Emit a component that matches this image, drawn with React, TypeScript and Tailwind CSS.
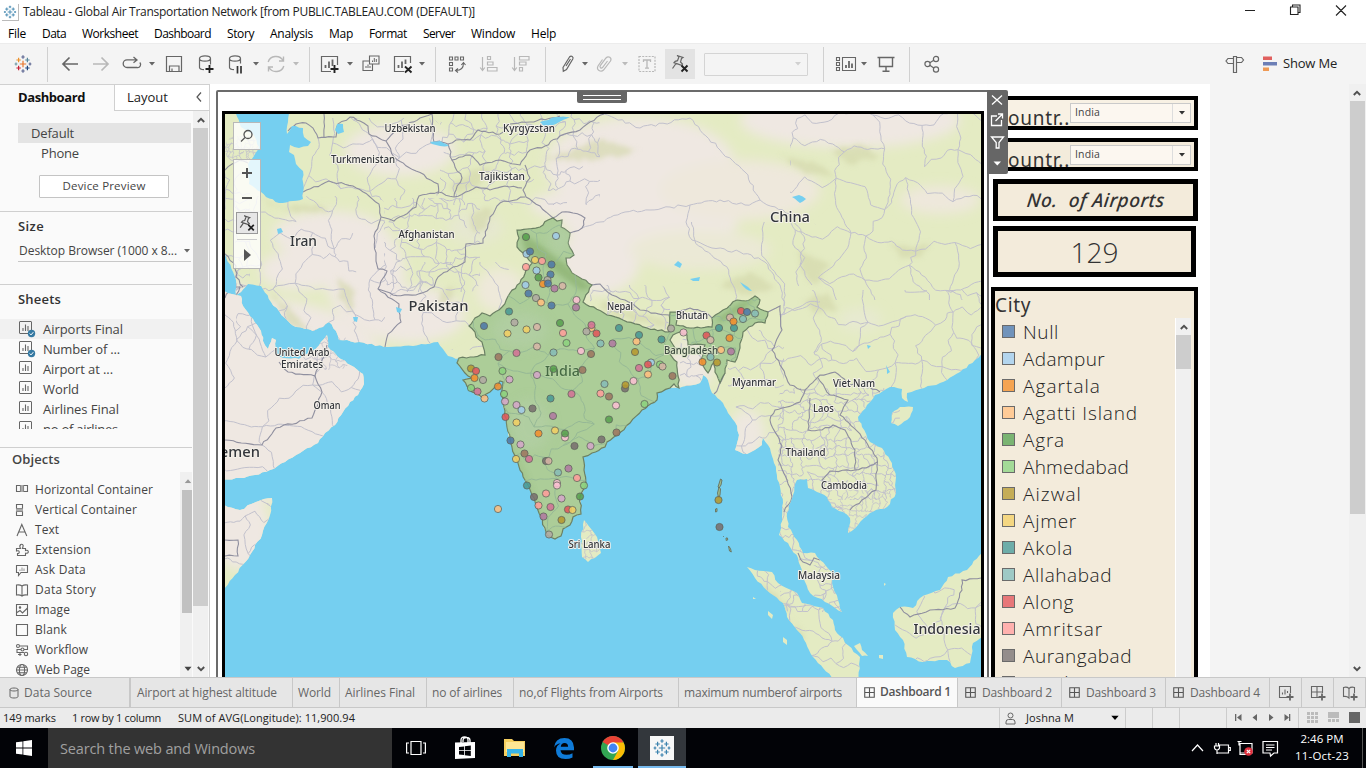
import React, { useLayoutEffect, useRef } from "react";

/* ---------- text helper: tracks a run of text out to a given width ---------- */
function T({ w, className = "", children }: { w?: number; className?: string; children: string }) {
  const ref = useRef<HTMLSpanElement>(null);
  useLayoutEffect(() => {
    const el = ref.current;
    if (!el || !w) return;
    el.style.letterSpacing = "0px";
    const natural = el.getBoundingClientRect().width;
    el.style.letterSpacing = `${((w - natural) / children.length).toFixed(3)}px`;
  }, [w, children]);
  return (
    <span ref={ref} className={`inline-block shrink-0 whitespace-pre ${className}`}>
      {children}
    </span>
  );
}

/* ---------- map geometry ---------- */
type P = [number, number];
const pts = (s: string): P[] => s.trim().split(/\s+/).map((p) => p.split(",").map(Number) as P);
function rng(seed: number) {
  let s = (seed * 2654435761) % 4294967296;
  return () => {
    s = (s * 1664525 + 1013904223) % 4294967296;
    return s / 4294967296;
  };
}
function rough(points: P[], amp: number, seed: number, close = false) {
  const r = rng(seed);
  const list = close ? [...points, points[0]] : points;
  let d = `M${list[0][0].toFixed(1)} ${list[0][1].toFixed(1)}`;
  for (let i = 1; i < list.length; i++) {
    const [ax, ay] = list[i - 1];
    const [bx, by] = list[i];
    const len = Math.hypot(bx - ax, by - ay);
    const n = Math.max(1, Math.round(len / 4));
    for (let k = 1; k < n; k++) {
      const o = (r() - 0.5) * 2 * amp;
      const x = ax + ((bx - ax) * k) / n - ((by - ay) / len) * o;
      const y = ay + ((by - ay) * k) / n + ((bx - ax) / len) * o;
      d += `L${x.toFixed(1)} ${y.toFixed(1)}`;
    }
    d += `L${bx.toFixed(1)} ${by.toFixed(1)}`;
  }
  return d + (close ? "Z" : "");
}
function wander(a: P, b: P, r: () => number, seed: number) {
  const at = (t: number): P => {
    const o = (r() - 0.5) * 0.3;
    return [a[0] + (b[0] - a[0]) * t - (b[1] - a[1]) * o, a[1] + (b[1] - a[1]) * t + (b[0] - a[0]) * o];
  };
  return rough([a, at(0.25), at(0.5), at(0.75), b], 0.8, seed);
}
function mesh(x0: number, y0: number, x1: number, y1: number, cell: number, seed: number) {
  const r = rng(seed);
  const cols = Math.ceil((x1 - x0) / cell) + 1;
  const rows = Math.ceil((y1 - y0) / cell) + 1;
  const g: P[][] = [];
  for (let j = 0; j < rows; j++) {
    g.push([]);
    for (let i = 0; i < cols; i++)
      g[j].push([x0 + (i + (r() - 0.5) * 0.8 + (j % 2) * 0.3) * cell, y0 + (j + (r() - 0.5) * 0.8) * cell]);
  }
  let d = "";
  for (let j = 0; j < rows; j++)
    for (let i = 0; i < cols; i++) {
      if (i + 1 < cols && r() < 0.78) d += wander(g[j][i], g[j][i + 1], r, seed + i * 7 + j * 13);
      if (j + 1 < rows && r() < 0.78) d += wander(g[j][i], g[j + 1][i], r, seed + i * 11 + j * 17 + 5);
    }
  return d;
}

const EURASIA =
  "220,110 220,216 225,254 236,280 236,295 241,292 248,284 261,286 271,302 279,311 288,321 296,327 313,331 323,327 329,322 336,331 339,340 359,342 384,347 413,346 438,342 443,349 448,356 456,359 459,358 457,363 465,373 472,378 463,380 472,392 483,398 490,392 500,381 503,382 502,390 503,403 507,427 512,447 518,463 525,480 532,495 541,517 547,535 555,539 561,536 563,529 570,525 573,517 581,514 580,497 586,485 584,470 583,457 592,453 605,447 607,442 617,435 630,423 642,410 657,400 657,393 670,388 679,388 700,383 703,375 708,380 712,393 723,403 728,413 735,422 739,435 735,450 747,454 762,445 763,438 768,445 774,463 780,487 783,503 782,517 779,535 788,543 798,558 803,577 810,593 825,602 842,612 838,600 833,587 832,572 820,560 815,553 803,553 797,540 788,527 787,513 793,495 797,480 807,479 808,488 817,492 827,497 832,507 843,512 850,518 848,533 858,525 870,513 887,507 896,493 896,477 890,460 882,448 870,442 862,427 858,417 867,405 875,395 890,387 902,389 902,398 908,402 907,393 920,389 940,383 960,372 975,360 986,352 986,110";
const ARABIA =
  "220,290 236,295 241,296 243,306 253,319 261,331 263,341 268,349 272,338 276,340 275,354 283,358 299,359 313,351 321,342 327,335 328,347 338,357 354,367 363,374 364,384 358,395 350,402 343,412 335,425 325,433 318,443 300,453 285,462 270,470 255,475 240,478 220,481";
const LANDS: string[] = [
  EURASIA,
  ARABIA,
  "220,504 240,510 256,502 272,498 270,515 262,535 250,555 235,575 220,594",
  "892,413 900,407 913,407 910,417 898,426 891,423",
  "747,567 755,570 772,572 778,583 797,593 802,603 823,608 833,620 835,630 843,638 845,643 860,657 859,680 834,680 813,657 800,633 787,617 783,603 770,593 755,578",
  "984,550 967,570 948,577 940,590 920,598 913,608 900,607 893,613 895,630 903,640 907,657 923,662 947,660 955,668 970,663 973,643 984,635",
  "584,520 597,537 601,553 588,562 582,557 581,537",
  "854,646 860,643 862,650 868,656 862,656",
  "879,655 883,655 883,659 879,658",
  "768,611 773,615 772,619 768,615",
  "783,637 787,640 787,645 783,642",
  "753,597 756,599 753,599",
  "884,583 886,584 884,586",
];
const CASPIAN =
  "234,110 290,110 288,122 287,134 292,126 303,128 304,137 311,142 308,146 299,148 290,145 289,152 294,155 296,164 303,171 303,199 293,201 279,203 266,197 261,192 249,184 248,164 254,156 259,147 253,134 241,127";
const INDIA =
  "459,358 485,355 482,342 476,337 475,332 469,326 475,318 482,313 490,316 502,307 510,293 520,283 526,270 532,263 523,253 517,247 519,238 517,230 527,229 540,227 548,220 553,218 557,221 562,220 561,227 570,233 568,243 574,255 570,258 566,258 567,265 572,273 592,285 583,302 607,315 623,320 647,328 669,332 670,312 677,312 676,325 690,328 712,327 712,318 723,310 737,300 746,301 755,296 760,300 757,307 768,312 765,323 755,323 743,332 740,348 735,362 727,360 725,373 720,383 715,372 714,362 708,373 702,363 703,350 705,345 688,345 687,335 680,332 673,335 670,340 675,348 670,354 677,362 678,376 679,388 674,384 670,388 657,393 657,400 642,410 630,423 617,435 607,442 605,447 592,453 583,457 584,470 586,485 580,497 581,514 573,517 570,525 563,529 561,536 555,539 547,535 541,517 532,495 525,480 518,463 512,447 507,427 503,403 502,390 503,382 500,381 490,392 483,398 472,392 463,380 472,378 465,373 457,363";
const BORDERS: string[] = [
  "225,254 236,266 236,277 243,287",
  "225,298 230,288 240,287 236,295",
  "225,170 232,164 240,160 248,163",
  "288,131 296,124 306,123 313,128 318,138 336,137 338,124 350,117 360,121 368,126 369,134 386,141 394,157 416,171 438,184 438,194",
  "324,114 324,138",
  "303,192 329,181 353,186 369,196 379,204 381,217 374,236 376,257 378,269 387,271 378,289 399,304 401,322 388,334 385,347",
  "381,217 394,221 416,207 419,196 438,192 454,197 476,187 490,190 505,186 522,188",
  "378,289 393,295 416,295 434,287 438,277 453,267 465,262 466,244 483,243 490,217 500,203 525,197",
  "386,141 400,128 420,118 432,114 434,142 448,144 456,140 470,140 478,130 500,134 510,124 530,122 560,116",
  "448,144 452,160 470,155 480,165 500,160 520,165 530,150 545,146 560,136 580,130 590,122 604,114",
  "452,160 462,178 456,190 454,197",
  "525,165 530,178 523,190 526,197 540,206 553,218",
  "592,285 600,284 612,295 625,300 640,310 655,313 669,315 670,320",
  "677,312 690,308 705,312 712,318",
  "768,312 780,306 782,330 772,350 780,365 790,385 805,390 800,402 775,410 770,420 782,446 778,460 787,480 792,497 784,512",
  "725,373 718,388 714,394",
  "805,390 815,380 820,375 835,372 850,385 865,385 880,392",
  "818,378 830,395 848,400 840,415 865,440 877,458 876,490 862,500 850,510",
  "810,398 808,430 822,430 833,425 845,430 855,450 855,470 830,471 822,480 824,490",
  "855,470 866,468 877,462",
  "899,606 910,617 930,610 955,608 962,590 962,580 981,578",
  "798,553 803,562 810,565 814,558 820,560",
  "279,362 288,372 315,376 322,360 327,345",
  "315,376 322,392 312,418 276,428 262,445 225,440",
  "225,540 238,540 238,556 225,556",
  "553,218 562,212 573,213 585,218 582,228 570,233",
];
const FINE: [string, number, number, number, number, number][] = [
  ["iran", 236, 196, 385, 350, 24],
  ["afghan", 384, 198, 480, 292, 13],
  ["turk", 300, 118, 440, 200, 34],
  ["stan", 440, 114, 600, 205, 15],
  ["pak", 390, 262, 515, 350, 34],
  ["tibet", 600, 222, 820, 315, 90],
  ["china", 790, 114, 990, 300, 42],
  ["south", 780, 290, 990, 395, 28],
  ["sea1", 778, 388, 900, 500, 9],
  ["sea2", 840, 490, 900, 535, 6],
  ["burma", 728, 330, 784, 460, 19],
  ["malay", 780, 500, 845, 612, 14],
  ["sumatra", 745, 565, 865, 680, 25],
  ["borneo", 890, 560, 984, 670, 32],
  ["arabia", 225, 300, 360, 480, 44],
  ["uae", 312, 335, 350, 370, 7],
  ["cauc", 225, 136, 258, 162, 4],
  ["iraq", 225, 165, 250, 290, 14],
  ["nepal", 590, 285, 670, 332, 15],
  ["bd", 680, 335, 703, 388, 11],
  ["lanka", 580, 520, 602, 562, 7],
  ["somalia", 225, 500, 272, 590, 24],
];
const SOFT_BORDERS = [
  "582,228 600,222 625,212 650,210 670,207 690,205 686,222 692,240 712,248 740,252 765,262 780,285 784,306",
  "604,114 640,128 690,118 720,150 745,172 760,200 790,214 805,240 800,265 812,285",
  "690,205 720,200 745,205 760,200",
];
const C: Record<string, string> = {
  g: "#59a14f", a: "#a0cbe8", b: "#4e79a7", y: "#f1ce63", s: "#ff9d9a", o: "#f28e2b", z: "#b0aaa2", t: "#d7b5a6",
  u: "#b07aa1", v: "#d4a6c8", p: "#ffbe7d", e: "#499894", l: "#86bcb6", n: "#9d7660", r: "#d37295", k: "#fabfd2",
  d: "#e15759", h: "#8cd17d", w: "#b6992d", x: "#79706e",
};
const MARKS =
  "526,237,g 556,236,a 526.5,254,a 530,251.5,b 535,260,y 542,261,s 551.5,264.5,b 526,267,s 536.5,270.5,a 550.5,274.5,b 538.5,277.5,g 547.5,280,z 543,284,o 548,283.5,b 525.5,285,a 554.5,288.5,u 562.5,286,t 528.5,293.5,b 536,298,z 541,302.5,p 551.5,305.5,b 576.5,300,k 576,307.5,u 509,311.5,e 514.5,322.5,z 484,326,b 507.5,333.5,y 526.5,329.5,y 537,327,t 560,323,g 563,333,s 591.5,328,p 591.5,325,r 596.5,333.5,d 586.5,331.5,z 619,328,e 639,335,e 661.5,339.5,e 636.5,341.5,p 635,352,w 600.5,343.5,l 612.5,343.5,u 566.5,343,h 537,346.5,t 553.5,352.5,l 516.5,353,r 498.5,357,n 581,351,k 591,354,n 502.5,371,h 509.5,379.5,v 471,368.5,w 476,371,d 474.5,378,o 483,380,z 553.5,369,g 582.5,370,n 537,375,v 651,362.5,a 648,364.5,d 660,364.5,h 662.5,366.5,t 639,368,r 648,374.5,p 672.5,376,n 633.5,381,k " +
  "671,328.5,z 683.5,332.5,k 706.5,335.5,d 710.5,340,t 719,328,e 734,328,e 730,317.5,t 733.5,321.5,o 741,311,d 747,312,b 743,319,l 755,313.5,l 729.5,338,o 721,350,p 731,351.5,u 710.5,357,l 702.5,362,o 717,362.5,w " +
  "498,386.5,o 471,388,h 477.5,391.5,r 484.5,398.5,p 504,394,h 505,401.5,v 516.5,405,v 521.5,410,a 532.5,408.5,x 550.5,398.5,e 571.5,394,r 604.5,384,l 600.5,393.5,s 609,396.5,n 625,388.5,x 625.5,385,w 616,405.5,k 644.5,404,h 553,416,u 505.5,417,d 516.5,422.5,y 538.5,433.5,o 555,430.5,y 565,437.5,k 565,433.5,g 609,419.5,g 616.5,432.5,n 601.5,439.5,x 590.5,446,v 574.5,446,x 510.5,440.5,b 520.5,444.5,v 524.5,453.5,n 529,459,r 516,459,y 546,461,x 548.5,461,t 568.5,468.5,u 558,472.5,l 577,478,s 557,483,k 557,485.5,k 527,485.5,e 534,497,x 546,493.5,s 561.5,498.5,v 584,485.5,h 580,496.5,g 538.5,505.5,s 550.5,507,r 568,509.5,d 572.5,510,y 543.5,516.5,u 561.5,520,w 549,534.5,z 498,509,p 718.5,500,w 719.5,527,x";
const LABELS: [string, number, number, number, number][] = [
  ["Uzbekistan", 410, 132, 51, 10], ["Kyrgyzstan", 529, 132, 52, 10], ["Turkmenistan", 363, 163, 64, 10],
  ["Tajikistan", 502, 180, 46, 10], ["Afghanistan", 426.5, 237.5, 56, 10], ["Iran", 303.5, 245.5, 27, 15],
  ["China", 790, 222, 40, 15], ["Pakistan", 438.5, 311, 60, 15], ["Nepal", 620, 310, 26, 10],
  ["Bhutan", 692, 318.5, 32, 10], ["Myanmar", 754, 386, 44, 10],
  ["Viet Nam", 854, 387, 42, 10], ["Laos", 823.5, 412, 21, 10], ["Thailand", 805.5, 456, 40, 10],
  ["Cambodia", 844, 489, 46, 10], ["Malaysia", 819, 579, 42, 10], ["Indonesia", 947, 634, 67, 15],
  ["Sri Lanka", 589.5, 548, 42, 10], ["Oman", 327, 409, 27, 10], ["United Arab", 302, 355.5, 55, 10],
  ["Emirates", 302, 367.5, 42, 10], ["Yemen", 236, 457, 48, 15],
];
const DRY: [number, number, number, number, string][] = [
  [330, 235, 58, 24, "#efe8e2"], [400, 150, 55, 26, "#efe8e2"], [300, 270, 40, 20, "#efe8e2"], [365, 275, 40, 50, "#efe8e2"],
  [270, 400, 130, 100, "#efe8e2"], [410, 315, 55, 28, "#efe8e2"], [500, 290, 24, 22, "#eee9da"], [640, 165, 95, 48, "#efe8e2"],
  [650, 215, 90, 42, "#efe8e2"], [600, 260, 40, 34, "#efe8e2"], [850, 120, 110, 28, "#efe8e2"], [740, 190, 80, 30, "#eee8dc"],
  [940, 200, 40, 14, "#eee8dc"], [692, 365, 22, 25, "#eee8e0"], [747, 435, 18, 26, "#eee8e0"], [240, 530, 30, 40, "#efe8e2"],
  [230, 310, 24, 30, "#efe8e2"], [860, 320, 22, 12, "#e7ead0"], [570, 205, 40, 14, "#efe8e2"], [475, 228, 28, 16, "#e6e8d0"],
  [700, 250, 70, 20, "#ebe9d6"],
];
const HILLS = [
  "262,197 285,208 318,204 330,212 300,212 268,206", "270,290 300,318 312,335 290,325", "335,275 355,290 352,312 340,300",
  "450,185 475,170 495,168 480,184 455,195", "470,215 492,205 488,228 474,232", "600,300 640,315 668,320 668,328 630,320 600,308",
  "540,160 600,140 640,150 600,160", "720,285 750,272 775,288 750,296", "800,250 830,265 815,285 800,270",
  "890,242 910,248 930,242 922,256 900,260", "780,155 815,163 835,176 805,174", "800,302 828,292 838,308 815,314",
  "830,150 862,144 880,158 850,164", "760,582 778,597 790,610 780,612 768,598", "790,615 805,640 800,640", "440,290 455,288 450,305 440,304",
];
const LAKES = [
  "337,124 343,124 344,132 338,134 335,130", "430,142 440,141 449,146 440,146 432,144", "277,229 281,228 283,232 278,234",
  "396,307 402,309 400,313 397,312", "353,317 358,317 357,322 354,321", "674,265 678,261 682,264 680,268", "690,279 695,278 700,277 699,281 693,281",
  "792,197 799,195 806,199 800,203", "740,282 748,287 752,291 746,289", "540,122 556,117 570,117 556,124 545,127",
  "886,365 890,372 887,374", "867,345 871,346 868,349",
];

function MapDrawing() {
  return (
    <svg viewBox="225 114 756 563" className="block h-full w-full">
      <defs>
        <clipPath id="land">{LANDS.map((l, i) => <path key={i} d={rough(pts(l), 0.9, i + 3, true)} />)}</clipPath>
        {FINE.map(([n, x0, y0, x1, y1]) => (
          <clipPath id={`r-${n}`} key={n}><rect x={x0} y={y0} width={x1 - x0} height={y1 - y0} rx="12" /></clipPath>
        ))}
        <clipPath id="india"><path d={rough(pts(INDIA), 0.9, 3, true)} /></clipPath>
        <filter id="soft" x="-20%" y="-20%" width="140%" height="140%"><feGaussianBlur stdDeviation="6" /></filter>
        <filter id="softer" x="-20%" y="-20%" width="140%" height="140%"><feGaussianBlur stdDeviation="2.4" /></filter>
      </defs>
      <rect x="225" y="114" width="756" height="563" fill="#75cff0" />
      <g clipPath="url(#land)">
        <rect x="225" y="114" width="756" height="563" fill="#e4ebc3" />
        <g filter="url(#soft)">{DRY.map(([x, y, rx, ry, f], i) => <ellipse key={i} cx={x} cy={y} rx={rx} ry={ry} fill={f} />)}</g>
        <g filter="url(#softer)">{HILLS.map((h, i) => <path key={i} d={rough(pts(h), 2.5, i + 60, true)} fill="#d2d6a9" opacity="0.62" />)}</g>
        {FINE.map(([n, x0, y0, x1, y1, c], i) => (
          <g key={n} clipPath={`url(#r-${n})`}>
            <path d={mesh(x0 - 4, y0 - 4, x1, y1, c, i + 21)} fill="none" stroke="#c1c0cc" strokeWidth={c < 8 ? 0.8 : 1} />
          </g>
        ))}
        {SOFT_BORDERS.map((b, i) => <path key={i} d={rough(pts(b), 1.5, i + 190)} fill="none" stroke="#c1c0cc" strokeWidth="1" />)}
        {BORDERS.map((b, i) => <path key={i} d={rough(pts(b), 1, i + 90)} fill="none" stroke="#8f8f9f" strokeWidth="1.1" />)}
      </g>
      <path d={rough(pts(CASPIAN), 0.8, 8, true)} fill="#75cff0" />
      {LAKES.map((l, i) => <path key={i} d={rough(pts(l), 0.6, i + 5, true)} fill="#75cff0" />)}
      <path d={rough(pts(INDIA), 0.9, 3, true)} fill="#accd98" stroke="#6b8064" strokeWidth="1.2" />
      <g clipPath="url(#india)">
        <g filter="url(#softer)" fill="#8db273" opacity="0.75">
          <path d="M520 232L545 248L575 272L592 288L580 290L550 268L525 250Z" />
          <path d="M715 320L740 303L756 298L745 308L722 322Z" />
          <path d="M503 400L512 440L530 480L545 520L538 520L520 480L505 440Z" opacity="0.3" />
        </g>
        <g filter="url(#soft)" fill="#b3cfa6" opacity="0.7">
          <ellipse cx="520" cy="330" rx="28" ry="18" /><ellipse cx="530" cy="425" rx="20" ry="26" /><ellipse cx="560" cy="240" rx="12" ry="14" />
        </g>
        <path d={mesh(460, 225, 685, 540, 38, 77)} fill="none" stroke="#96b896" strokeWidth="1" />
        <path d={mesh(690, 295, 775, 385, 20, 78)} fill="none" stroke="#96b896" strokeWidth="1" />
      </g>
      <g fill="#9fbd8c" stroke="#66705f" strokeWidth="0.9">
        <path d="M720.5 479l1.500 1-1 5-2 3-1-1zM719 487l1.500 2-.5 6-1.500 3-1-5z" />
        <path d="M715.500 509l1.500-.5v3l-1.500.5zM723 536l.8.8M726 538l1.500 0 .2 2-1.500.5zM728.500 546l2 2.500.8 3.500-1.800-1z" />
      </g>
      <g fontFamily="'Noto Sans', sans-serif" fontWeight="500" textAnchor="middle">
        {LABELS.map(([t, x, y, w, s]) => (
          <text key={t} x={x} y={y} fontSize={s} textLength={w} lengthAdjust="spacingAndGlyphs" fill="#33363b" stroke="#f4f1ea" strokeWidth="2" strokeLinejoin="round" paintOrder="stroke">{t}</text>
        ))}
        <text x="562.500" y="375.500" fontSize="15" textLength="35" lengthAdjust="spacingAndGlyphs" fill="#466a43" stroke="#b9d5a8" strokeWidth="1.500" paintOrder="stroke">India</text>
        <text x="691" y="354" fontSize="10" textLength="54" lengthAdjust="spacingAndGlyphs" fill="#3d4a40" stroke="#dbe4c8" strokeWidth="1.800" paintOrder="stroke">Bangladesh</text>
      </g>
      <g stroke="#5d635b" strokeWidth="0.9" strokeOpacity="0.85" fillOpacity="0.88">
        {MARKS.split(" ").map((m, i) => {
          const [x, y, c] = m.split(",");
          return <circle key={i} cx={x} cy={y} r="3.600" fill={C[c]} />;
        })}
      </g>
    </svg>
  );
}

/* ---------- small icons ---------- */
const Caret = ({ c = "fill-[#666]" }: { c?: string }) => (
  <svg viewBox="0 0 6 4" className={`h-[4px] w-[6px] shrink-0 ${c}`}><path d="M0 0h6L3 3.500z" /></svg>
);
function Ico({ children, className = "", dim = false }: { children: React.ReactNode; className?: string; dim?: boolean }) {
  return (
    <svg viewBox="0 0 22 22" className={`h-[22px] w-[22px] shrink-0 ${dim ? "text-[#b8b8b8]" : "text-[#666]"} ${className}`} fill="none" stroke="currentColor" strokeWidth="1.200">
      {children}
    </svg>
  );
}
const Sep = ({ className }: { className: string }) => <div className={`h-[35px] w-px shrink-0 bg-[#d0d0d0] ${className}`} />;
const Plus = ({ x, y, s, c }: { x: number; y: number; s: number; c: string }) => <path d={`M${x - s} ${y}h${2 * s}M${x} ${y - s}v${2 * s}`} stroke={c} strokeWidth="1.200" />;
function Logo({ mono = false }: { mono?: boolean }) {
  const c = mono ? Array(9).fill("#3c83ae") : ["#e8762c", "#5b6591", "#c72037", "#5c6692", "#1f447e", "#eb912c", "#59879b", "#7199a6", "#7199a6"];
  return (
    <>
      <Plus x={11} y={11} s={3.2} c={c[0]} />
      <Plus x={11} y={4} s={1.7} c={c[1]} />
      <Plus x={11} y={18} s={1.7} c={c[1]} />
      <Plus x={6.6} y={7} s={2.2} c={c[5]} />
      <Plus x={15.4} y={7} s={2.2} c={c[6]} />
      <Plus x={6.6} y={15} s={2.2} c={c[2]} />
      <Plus x={15.4} y={15} s={2.2} c={c[4]} />
      <Plus x={4} y={11} s={1.4} c={c[7]} />
      <Plus x={18} y={11} s={1.4} c={c[3]} />
    </>
  );
}
const Pin = () => (
  <>
    <path d="M8 2.500l6 2-1.500 1-1 3.500 2 2-1 1.200-4-1.300-3.500-1.200 1.200-1.400 2.300-.6 1.500-4zM7 10.500L3.500 15.500" />
    <path d="M12.500 12.500l6 6M18.500 12.500l-6 6" stroke="#222" strokeWidth="1.900" />
  </>
);
const Chevron = ({ down = false }: { down?: boolean }) => (
  <svg viewBox="0 0 8 6" className={`h-[6px] w-[8px] ${down ? "rotate-180" : ""}`} fill="none" stroke="#505050" strokeWidth="1.900"><path d="M.8 5L4 1.800 7.200 5" /></svg>
);

function Toolbar() {
  return (
    <div className="flex h-[41px] shrink-0 items-center border-t border-[#ececec] bg-[#f4f4f4] font-['Open_Sans',sans-serif]">
      <Ico className="ml-[12px]"><Logo /></Ico>
      <Sep className="ml-[13px]" />
      <Ico className="ml-[11px]"><path d="M19 11H4M10.500 4.500L4 11l6.500 6.500" strokeWidth="1.700" /></Ico>
      <Ico dim className="ml-[9px]"><path d="M3 11h15M11.500 4.500L18 11l-6.500 6.500" strokeWidth="1.700" /></Ico>
      <Ico className="ml-[9px]"><path d="M16 14.500H6a3.800 3.800 0 010-7.600h9.500M18.800 9.500a3 3 0 01-2.800 5M12.500 4l3.500 2.900-3.500 2.900" strokeWidth="1.300" /></Ico>
      <div className="ml-[6px]"><Caret /></div>
      <Ico className="ml-[8px]"><path d="M3.500 3.500h15v15h-15zM6.500 18.500V13h9.500v5.500M9 18v-2.500" /></Ico>
      <Ico className="ml-[10px]"><path d="M4.500 5.500c0-3.500 11-3.500 11 0s-11 3.500-11 0v9c0 1.300 2 2 4.500 2.200M15.500 5.500v6" /><path d="M14.500 12v8M10.500 16h8" stroke="#222" strokeWidth="1.800" /></Ico>
      <Ico className="ml-[8px]"><path d="M4.500 5.500c0-3.500 11-3.500 11 0s-11 3.500-11 0v9c0 1.300 2 2 4.500 2.200M15.500 5.500v5" /><path d="M12.500 13v7.500M16 13v7.500" stroke="#333" strokeWidth="1.700" /></Ico>
      <div className="ml-[6px]"><Caret /></div>
      <Ico dim className="ml-[6px]"><path d="M3.200 9A8 7.500 0 0118 7.500M18.800 13A8 7.500 0 014 14.500M18.500 3.500v4.500h-4.500M3.500 18.500V14H8" strokeWidth="1.400" /></Ico>
      <div className="ml-[6px]"><Caret c="fill-[#bbb]" /></div>
      <Sep className="ml-[10px]" />
      <Ico className="ml-[9px]"><path d="M12 18.500H2.500v-15h16V12" /><path d="M6.500 15v-3M10 15V8.500M13.500 13V6.500" strokeWidth="1.800" /><path d="M15.500 12v8M11.500 16h8" stroke="#222" strokeWidth="1.900" /></Ico>
      <div className="ml-[6px]"><Caret /></div>
      <Ico className="ml-[7px]"><path d="M9.500 3h9.500v8H9.500zM9 8H3v9.500h9.500V11.500" strokeWidth="1.100" /><path d="M12.500 9V7.500M14.300 9V5M16.300 9V6M6 15v-2M8 15v-3.500M10 15v-2" strokeWidth="1" /></Ico>
      <Ico className="ml-[10px]"><path d="M12 18.500H2.500v-15h16V10" /><path d="M6.500 15v-3M10 15V8.500M13.500 11V6.500" strokeWidth="1.800" /><path d="M13 13.500l6.500 6M19.500 13.500l-6.500 6" stroke="#222" strokeWidth="1.900" /></Ico>
      <div className="ml-[5px]"><Caret /></div>
      <Sep className="ml-[10px]" />
      <Ico className="ml-[10px]"><path d="M3.500 4h3v3h-3zM9 4h3v3H9zM14.500 4h3v3h-3zM3.500 9.500h3v3h-3zM3.500 15h3v3h-3zM10 17.500c5 0 7.500-2.500 7.500-7.500M15.300 12l2.200-2.500 2 2.500M12 15.500l-2.500 2 2.500 2" strokeWidth="1.100" /></Ico>
      <Ico dim className="ml-[10px]"><path d="M4.500 4v13M2.200 14.500l2.300 3 2.300-3M9.500 3.500h3v3h-3zM9.500 9h5.500v3H9.500zM9.500 14.500h9.500v3.500H9.500z" /></Ico>
      <Ico dim className="ml-[10px]"><path d="M4.500 4v13M2.200 14.500l2.300 3 2.300-3M9.500 3.500H19V7H9.500zM9.500 9h6.500v3H9.500zM9.500 14.500h3V18h-3z" /></Ico>
      <Sep className="ml-[13px]" />
      <Ico className="ml-[11px]"><path d="M6 14.500L12.500 4q1.300-1.500 2.700-.6t.6 2.600L9.500 16.500l-3.200 1.700zM9 13l4.500-7" /></Ico>
      <div className="ml-[3px]"><Caret /></div>
      <Ico dim className="ml-[6px]"><path d="M13.500 8l-5 6.500q-1 1-2 .2t-.2-2L12 5q1.800-2 3.800-.7t.7 3.700L9.500 17q-2 2-4.500.5t-1-4.500l4.500-6.500" /></Ico>
      <div className="ml-[6px]"><Caret c="fill-[#bbb]" /></div>
      <Ico dim className="ml-[8px]"><path d="M3 3.500h16v15H3z" strokeDasharray="2 1.200" /><path d="M7.500 9V7h7v2M11 7v8M9 15.200h4" strokeWidth="1.300" /></Ico>
      <div className="ml-[7px] flex h-[30px] w-[30px] items-center justify-center bg-[#e3e3e3]">
        <Ico className="text-[#444]"><Pin /></Ico>
      </div>
      <div className="ml-[9px] flex h-[23px] w-[104px] shrink-0 items-center justify-end rounded-[1px] border border-[#d4d4d4] pr-[6px]"><Caret c="fill-[#d0d0d0]" /></div>
      <Sep className="ml-[15px]" />
      <Ico className="ml-[11px]"><path d="M1.500 4.500h3v3h-3zM1.500 9.500h3v3h-3zM1.500 14.500h3v3h-3zM7.500 4.500h13v13h-13z" strokeWidth="1.100" /><path d="M11 15v-3M14 15V8M17 15v-4.500" strokeWidth="1.800" /></Ico>
      <div className="ml-[4px]"><Caret /></div>
      <Ico className="ml-[8px]"><path d="M2.500 4.500h17M4.500 5v8.500h13V5M11 13.500V18M7.500 18.200h7" strokeWidth="1.400" /></Ico>
      <Sep className="ml-[12px]" />
      <Ico className="ml-[11px]"><circle cx="6.500" cy="11" r="2.600" /><circle cx="15" cy="6" r="2.600" /><circle cx="15" cy="16.500" r="2.600" /><path d="M8.800 9.800l4-2.500M8.800 12.200l4 2.800" /></Ico>
      <Ico className="ml-[281px]"><path d="M9.500 3.500h3v16h-3zM12.500 4.500h5l2 2.500-2 2.500h-5M9.500 5.500H4L2 8l2 2.500h5.500" /></Ico>
      <svg viewBox="0 0 16 16" className="ml-[16px] h-[16px] w-[16px]"><path d="M1 .5h9v3.500H1z" fill="#e0605e" /><path d="M1 6h14v3.500H1z" fill="#6c7fb6" /><path d="M1 11.500h6V15H1z" fill="#ef9a55" /></svg>
      <div className="ml-[5px] flex pb-px"><T w={54} className="text-[13px] text-[#222]">Show Me</T></div>
    </div>
  );
}

const SheetIcon = ({ used }: { used: boolean }) => (
  <svg viewBox="0 0 18 18" className="h-[18px] w-[18px] shrink-0" fill="none" stroke="#666" strokeWidth="1">
    <rect x="1.500" y="1.500" width="12" height="12" rx="0.500" /><path d="M5 11V8M7.500 11V4.500M10 11V6" strokeWidth="1.100" />
    {used && <><circle cx="13.500" cy="13.500" r="3.700" fill="#3579a2" stroke="none" /><path d="M11.700 13.500l1.300 1.400 2.300-2.700" stroke="#fff" /></>}
  </svg>
);
const SHEETS: [string, number, boolean][] = [["Airports Final", 80, true], ["Number of ...", 77, true], ["Airport at ...", 70, false], ["World", 36, false], ["Airlines Final", 76, false], ["no of airlines", 75, false]];
const OBJECTS: [string, number, React.ReactNode][] = [
  ["Horizontal Container", 118, <><path d="M1.500 2.500h4v6h-4zM8.500 2.500h4v6h-4z" /><path d="M5.500 2h3v7h-3z" fill="#aaa" stroke="none" /></>],
  ["Vertical Container", 102, <><path d="M1.500 1.500h6v4h-6zM1.500 8.500h6v4h-6z" /><path d="M1 5.500h7v3H1z" fill="#aaa" stroke="none" /></>],
  ["Text", 24, <path d="M2 13L6.800 1.500 11.800 13M3.800 9h6" />],
  ["Extension", 56, <path d="M4 5.500h1.500Q4 3 5.700 1.500q2-.7 2.500 1.200L7.500 5.500h3v2q2.800-.8 2.800 1.200t-2.800 1.500v2.300H2.500V10.500q2 0 1.700-1.700T1.500 8V5.500z" />],
  ["Ask Data", 51, <><path d="M1.500 2.500h11v7H6l-2.500 3v-3h-2z" /><path d="M5 8V6.500M7 8V4.500M9 8V5.500" stroke="#999" /></>],
  ["Data Story", 61, <path d="M7 3q-2-1.500-5.500-1v10q3.500-.5 5.500 1 2-1.500 5.500-1V2Q9 1.500 7 3v10" />],
  ["Image", 35, <><path d="M1.500 1.500h11v11h-11zM2 9.500l3-2 2.500 2.500L12.500 5" /><circle cx="5" cy="4.500" r=".7" fill="#666" /></>],
  ["Blank", 32, <path d="M1.500 1.500h11v11h-11z" />],
  ["Workflow", 53, <><circle cx="3" cy="3" r="1.500" /><circle cx="7.500" cy="6.500" r="1.500" /><circle cx="11" cy="11" r="1.700" /><path d="M5 3h7.500v3.500H9M6 6.500H2v3h7M5 9.500V13M3 11.500h3.500" /></>],
  ["Web Page", 55, <><circle cx="7" cy="7" r="5.500" /><ellipse cx="7" cy="7" rx="2.600" ry="5.500" /><path d="M1.500 7h11M2.300 4.200h9.400M2.300 9.800h9.400" /></>],
];

function LeftPanel() {
  return (
    <div className="flex h-full w-[210px] shrink-0 flex-col border-r border-t border-[#d0d0d0] bg-[#fafafa] font-['Open_Sans',sans-serif] text-[#444]">
      <div className="flex h-[26px] shrink-0">
        <div className="flex w-[114px] items-center pl-[18px]"><T w={67} className="text-[13px] font-bold text-[#111]">Dashboard</T></div>
        <div className="flex flex-1 items-center justify-between border-b border-l border-[#d0d0d0] bg-white pl-[12px] pr-[7px]">
          <T w={41} className="text-[13px] text-[#222]">Layout</T>
          <svg viewBox="0 0 6 10" className="mb-[2px] h-[10px] w-[6px]" fill="none" stroke="#555" strokeWidth="1.200"><path d="M5 .5L1 5l4 4.500" /></svg>
        </div>
      </div>
      <div className="flex min-h-0 flex-1">
        <div className="flex w-[192px] shrink-0 flex-col overflow-hidden">
          <div className="ml-[18px] mr-px mt-[12px] flex h-[20px] shrink-0 items-center bg-[#e4e4e4] pl-[13px] pt-px"><T w={43} className="text-[13px]">Default</T></div>
          <div className="flex h-[20px] shrink-0 items-center pl-[41px] pt-[2px]"><T w={38} className="text-[13px]">Phone</T></div>
          <div className="ml-[39px] mt-[12px] flex h-[23px] w-[130px] shrink-0 items-center justify-center rounded-[1px] border border-[#c4c4c4] bg-white pb-px"><T w={83} className="text-[11.500px]">Device Preview</T></div>
          <div className="mt-[13px] flex h-[74px] shrink-0 flex-col border-b border-t border-[#cfcfcf] pl-[18px]">
            <div className="mt-[5px] flex"><T w={26} className="text-[13px] font-semibold leading-[18px] text-[#333]">Size</T></div>
            <div className="mr-px mt-[5px] flex h-[22px] shrink-0 items-center justify-between border-b border-[#c8c8c8] pl-px pr-px"><T w={158} className="text-[12px]">Desktop Browser (1000 x 8...</T><Caret /></div>
          </div>
          <div className="flex shrink-0 pl-[18px] pt-[4px]"><T w={43} className="text-[13px] font-semibold leading-[20px] text-[#333]">Sheets</T></div>
          <div className="mt-[10px] flex h-[110px] shrink-0 flex-col overflow-hidden">
            {SHEETS.map(([s, w, used], i) => (
              <div key={s} className={`flex h-[20px] shrink-0 items-center pl-[18px] ${i === 0 ? "bg-[#f1f1f1]" : ""}`}>
                <SheetIcon used={used} /><T w={w} className="ml-[7px] pt-[2px] text-[13px]">{s}</T>
              </div>
            ))}
          </div>
          <div className="mt-[18px] flex h-[25px] shrink-0 items-center border-t border-[#cfcfcf] pb-[2px] pl-[12px]"><T w={48} className="text-[13px] font-semibold leading-[17px] text-[#444]">Objects</T></div>
          <div className="flex h-[205px] shrink-0">
            <div className="w-[180px] overflow-hidden pt-[8px]">
              {OBJECTS.map(([s, w, icon]) => (
                <div key={s} className="flex h-[20px] items-center pl-[15px]">
                  <svg viewBox="0 0 14 14" className="h-[14px] w-[14px] shrink-0" fill="none" stroke="#666" strokeWidth="1.100">{icon}</svg>
                  <T w={w} className="ml-[6px] text-[12px]">{s}</T>
                </div>
              ))}
            </div>
            <div className="flex w-[12px] flex-col items-end bg-[#f0f0f0]">
              <div className="flex h-[18px] items-center pr-[1px]"><div className="rotate-180"><Caret c="fill-[#999] scale-[1.15]" /></div></div>
              <div className="h-[123px] w-[10px] bg-[#c1c1c1]" />
              <div className="mt-[54px] pr-px"><Caret c="fill-[#444] scale-[1.25]" /></div>
            </div>
          </div>
        </div>
        <div className="ml-px flex w-[15px] flex-col items-center bg-[#f0f0f0]">
          <div className="flex h-[17px] items-center"><Chevron /></div>
          <div className="h-[478px] w-full bg-[#cdcdcd]" />
          <div className="mt-auto flex h-[17px] items-center"><Chevron down /></div>
        </div>
      </div>
    </div>
  );
}

function CountryFilter({ className, bg, label }: { className: string; bg: string; label: string }) {
  return (
    <div className={`flex w-[207px] shrink-0 items-start justify-end overflow-hidden border-4 border-black ${bg} ${className}`}>
      <T w={62} className={`-mb-3 font-['Noto_Sans',sans-serif] text-[19px] leading-[26px] text-[#333] ${label}`}>ountr..</T>
      <div className="mr-[3px] mt-[3px] flex h-[20px] w-[121px] shrink-0 items-center border border-[#cacaca] bg-[#fcf7f0]">
        <T w={25} className="ml-[4px] font-['Open_Sans',sans-serif] text-[10.500px] text-[#444]">India</T>
        <div className="ml-auto flex h-full w-[18px] items-center justify-center border-l border-[#ddd]"><Caret c="fill-[#333]" /></div>
      </div>
    </div>
  );
}

const CITIES: [string, number, string][] = [
  ["Null", 36, "bg-[#7093bb]"], ["Adampur", 82, "bg-[#b3d5ee]"], ["Agartala", 78, "bg-[#f5a452]"], ["Agatti Island", 115, "bg-[#ffcb97]"],
  ["Agra", 42, "bg-[#7ab472]"], ["Ahmedabad", 106, "bg-[#a3da97]"], ["Aizwal", 59, "bg-[#c5ad57]"], ["Ajmer", 54, "bg-[#f4d782]"],
  ["Akola", 50, "bg-[#6dada9]"], ["Allahabad", 89, "bg-[#9ec9c5]"], ["Along", 51, "bg-[#e77779]"], ["Amritsar", 80, "bg-[#ffb1ae]"],
  ["Aurangabad", 109, "bg-[#948d8b]"], ["Bagdogra", 88, "bg-[#cac0bc]"],
];

function Dashboard() {
  return (
    <div className="relative flex min-w-0 flex-1 overflow-hidden bg-[#f4f4f4]">
      <div className="flex w-[1000px] shrink-0 bg-white">
        <div className="mt-[6px] h-[700px] w-[779px] shrink-0 pl-[6px]">
          <div className="h-full rounded-tl-[2px] border-2 border-[#6b6b6b] pl-[4px] pt-[19px]">
            <div className="relative h-[569px] w-[762px] border-[3px] border-b-0 border-black">
              <div className="h-[563px] w-[756px]"><MapDrawing /></div>
              <div className="absolute left-[8px] top-[8px] flex h-[28px] w-[28px] items-center justify-center border border-[#b8b8b8] bg-white/80">
                <svg viewBox="0 0 14 14" className="h-[14px] w-[14px]" fill="none" stroke="#555" strokeWidth="1.300"><circle cx="8" cy="5.500" r="4" /><path d="M5 8.500L1 12.500" /></svg>
              </div>
              <div className="absolute left-[8px] top-[45px] flex h-[110px] w-[28px] flex-col items-center border border-[#b8b8b8] bg-white/80">
                <svg viewBox="0 0 12 12" className="mt-[7px] h-[12px] w-[12px]" stroke="#555" strokeWidth="2"><path d="M1 6h10M6 1v10" /></svg>
                <svg viewBox="0 0 12 12" className="mt-[13px] h-[12px] w-[12px]" stroke="#555" strokeWidth="2"><path d="M1 6h10" /></svg>
                <div className="mt-[8px] flex h-[22px] w-[22px] items-center justify-center border border-[#999] bg-[#e6e6e6]">
                  <svg viewBox="0 0 22 22" className="h-[21px] w-[21px]" fill="none" stroke="#555" strokeWidth="1.300"><Pin /></svg>
                </div>
                <div className="mt-[5px] h-px w-[20px] bg-[#ccc]" />
                <svg viewBox="0 0 7 12" className="mt-[9px] h-[12px] w-[7px]" fill="#555"><path d="M0 0l7 6-7 6z" /></svg>
              </div>
            </div>
          </div>
        </div>
        <div className="ml-[2px] flex w-[207px] shrink-0 flex-col">
          <CountryFilter className="mt-[12px] h-[34px]" bg="bg-[#f8f1e4]" label="mt-[5px]" />
          <CountryFilter className="mt-[8px] h-[33px]" bg="bg-[#f3ebdb]" label="mt-[5px]" />
          <div className="ml-[2px] mt-[8px] flex h-[42px] w-[205px] shrink-0 items-center justify-center border-[5px] border-black bg-[#f3ebdb]"><T w={143} className="-skew-x-6 pl-[2px] font-['Noto_Sans',sans-serif] text-[19px] font-medium italic text-[#333]">No.  of Airports</T></div>
          <div className="ml-[2px] mt-[5px] flex h-[51px] w-[203px] shrink-0 items-center justify-center border-[5px] border-black bg-[#f3ebdb]"><T w={48} className="font-['Open_Sans',sans-serif] text-[28px] font-light leading-[30px] text-[#333]">129</T></div>
          <div className="mt-[10px] flex h-[420px] w-[207px] shrink-0 flex-col overflow-hidden border-4 border-black bg-[#f3ebdb]">
            <T w={36} className="mt-[2px] self-start font-['Noto_Sans',sans-serif] text-[19px] leading-[25px] text-[#333]">City</T>
            <div className="flex flex-1">
              <div className="w-[180px] shrink-0">
                {CITIES.map(([c, w, bg]) => (
                  <div key={c} className="flex h-[27px] items-center pl-[7px]">
                    <div className={`h-[13px] w-[13px] shrink-0 border border-[#6a6a6a] ${bg}`} />
                    <T w={w} className="ml-[8px] pt-px font-['Open_Sans',sans-serif] text-[19px] font-light leading-[25px] text-[#222]">{c}</T>
                  </div>
                ))}
              </div>
              <div className="flex w-[16px] flex-col items-center border-l border-white bg-[#f0f0f0]">
                <div className="flex h-[17px] items-center"><Chevron /></div>
                <div className="h-[34px] w-full bg-[#cdcdcd]" />
              </div>
            </div>
          </div>
        </div>
      </div>
      <div className="ml-auto flex w-[17px] flex-col items-center bg-[#f0f0f0] pr-px">
        <div className="flex h-[17px] items-center"><Chevron /></div>
        <div className="h-[413px] w-[15px] bg-[#cdcdcd]" />
        <div className="mt-auto flex h-[17px] items-center"><Chevron down /></div>
      </div>
      <div className="absolute left-[367px] top-[7px] flex h-[12px] w-[50px] flex-col justify-center gap-[3px] rounded-b-[2px] bg-[#666] px-[6px]">
        <div className="h-px bg-white" /><div className="h-px bg-white" />
      </div>
      <div className="absolute left-[777px] top-[6px] flex h-[84px] w-[21px] flex-col items-center rounded-r-[2px] bg-[#666]">
        <svg viewBox="0 0 21 84" className="h-[84px] w-[21px]" fill="none" stroke="#fff" strokeWidth="1.300">
          <path d="M5 5.500l10 9M15 5.500l-10 9" /><path d="M10 26H4.500v9.500h10V30M8.500 31l7-7M11 24h4.500v4.500" />
          <path d="M4.500 47h12l-4.500 5.500V58l-2.800 0v-5.500z" /><path d="M6.500 71.500h7.500l-3.700 4z" fill="#fff" stroke="none" />
        </svg>
      </div>
    </div>
  );
}

const GridIcon = () => <svg viewBox="0 0 12 12" className="h-[11px] w-[11px] shrink-0" fill="none" stroke="#555" strokeWidth="1.200"><path d="M.8.8h10.400v10.400H.8zM6 .8v10.400M.8 6h10.400" /></svg>;
const TABS: [string, number, string][] = [
  ["Airport at highest altitude", 140, "w-[162px] pl-[6px]"], ["World", 33, "w-[47px] pl-[5px]"], ["Airlines Final", 70, "w-[87px] pl-[5px]"],
  ["no of airlines", 70, "w-[87px] pl-[5px]"], ["no,of Flights from Airports", 144, "w-[165px] pl-[5px]"], ["maximum numberof airports", 158, "w-[178px] pl-[5px]"],
];

function SheetTabs() {
  return (
    <div className="flex h-[31px] shrink-0 border-y border-[#c8c8c8] bg-[#e6e6e6] font-['Open_Sans',sans-serif] text-[12px] text-[#666]">
      <div className="flex w-[131px] items-center border-r-2 border-[#c8c8c8] pl-[9px]">
        <svg viewBox="0 0 10 12" className="h-[12px] w-[10px]" fill="none" stroke="#666"><path d="M1 2.500c0-2 8-2 8 0v7c0 2-8 2-8 0zM1 2.500c0 2 8 2 8 0" /></svg>
        <T w={68} className="ml-[5px] pt-px">Data Source</T>
      </div>
      {TABS.map(([t, w, c]) => <div key={t} className={`flex shrink-0 items-center border-r border-[#c8c8c8] pt-px ${c}`}><T w={w}>{t}</T></div>)}
      <div className="flex w-[101px] shrink-0 items-center border-r border-[#c8c8c8] bg-[#fafafa] pb-[1px] pl-[7px]"><GridIcon /><T w={71} className="ml-[5px] font-semibold text-[#555]">Dashboard 1</T></div>
      {["Dashboard 2", "Dashboard 3", "Dashboard 4"].map((t) => (
        <div key={t} className="flex w-[104px] shrink-0 items-center border-r border-[#c8c8c8] pl-[7px]"><GridIcon /><T w={70} className="ml-[6px] pt-px">{t}</T></div>
      ))}
      {[0, 1, 2].map((k) => (
        <div key={k} className="flex w-[32px] shrink-0 items-center justify-center border-r border-[#c8c8c8]">
          <svg viewBox="0 0 16 16" className="h-[16px] w-[16px]" fill="none" stroke="#666" strokeWidth="1.100">
            {k === 0 && <path d="M10 12.500H1.500v-11h11V8M4.500 9.500v-2M7 9.500v-5M9.500 8V6" />}
            {k === 1 && <path d="M9 12.500H1.500v-11h11V8M7 1.500v11M1.500 7h11" />}
            {k === 2 && <path d="M7 3.500Q5 1.500 1.500 2.500v9q3.500-.5 5.500 1.500V3.500Q9 1.500 12.500 2.500V8" />}
            <path d="M12 8.500v7M8.500 12h7" strokeWidth="1.800" />
          </svg>
        </div>
      ))}
    </div>
  );
}

function StatusBar() {
  return (
    <div className="flex h-[20px] shrink-0 items-center bg-[#ebebeb] font-['Open_Sans',sans-serif] text-[11px] text-[#222]">
      <T w={53} className="ml-[3px]">149 marks</T>
      <T w={89} className="ml-[16px]">1 row by 1 column</T>
      <T w={177} className="ml-[17px]">SUM of AVG(Longitude): 11,900.94</T>
      <div className="ml-auto flex h-full w-[127px] items-center border-x border-[#ccc] pl-[5px]">
        <svg viewBox="0 0 11 13" className="h-[13px] w-[11px]" fill="none" stroke="#666"><circle cx="5.500" cy="3.500" r="2.500" /><path d="M1 12V10q0-2.500 2.500-2.500h4Q10 7.500 10 10v2z" /></svg>
        <T w={48} className="ml-[10px]">Joshna M</T>
        <div className="ml-auto mr-[7px]"><Caret c="fill-black scale-[1.300]" /></div>
      </div>
      <div className="h-full w-[27px] border-r border-[#ccc]" />
      <div className="h-full w-[27px] border-r border-[#ccc]" />
      <div className="h-full w-[47px] border-r border-[#ccc]" />
      <svg viewBox="0 0 71 20" className="h-[20px] w-[71px]" fill="#666"><path d="M8 6h1.300v7H8zM14.500 6v7L10 9.500zM30 6v7l-4.500-3.500zM42 6v7l4.500-3.500zM57.500 6v7l4.500-3.500zM62 6h1.300v7H62z" /></svg>
      <div className="h-full w-px bg-[#ccc]" />
      <svg viewBox="0 0 67 20" className="h-[20px] w-[67px]" fill="#bbb">
        {[0, 1, 2].map((i) => [0, 1, 2].map((j) => <rect key={`${i}${j}`} x={8 + i * 4} y={4 + j * 4} width="3" height="3" />))}
        <path d="M29 4h11v6H29zM29 11h3v3h-3zM33 11h3v3h-3zM37 11h3v3h-3z" /><path d="M50 4h11v11H50z" fill="#666" />
      </svg>
    </div>
  );
}

function Taskbar() {
  return (
    <div className="flex h-[40px] shrink-0 bg-[#020307] font-['Open_Sans',sans-serif]">
      <div className="flex w-[48px] items-center justify-center">
        <svg viewBox="0 0 16 16" className="h-[16px] w-[16px]" fill="#fff"><path d="M0 2.300L6.500 1.400v6.200H0zM7.300 1.300L16 0v7.600H7.300zM0 8.400h6.500v6.200L0 13.700zM7.300 8.400H16V16l-8.700-1.300z" /></svg>
      </div>
      <div className="flex w-[344px] items-center bg-[#333] pl-[12px] pt-px"><T w={195} className="text-[14.500px] text-[#a0a0a0]">Search the web and Windows</T></div>
      <div className="flex w-[48px] items-center justify-center"><svg viewBox="0 0 20 16" className="h-[16px] w-[20px]" fill="none" stroke="#fff" strokeWidth="1.200"><path d="M5 1.500h10v13H5zM3 3H.6v10H3M17 3h2.400v10H17" /></svg></div>
      <div className="flex w-[50px] items-center justify-center">
        <svg viewBox="0 0 22 24" className="h-[24px] w-[22px]"><path d="M7 7V4q0-3 3.500-3T14 4v3M9 6V4.500q0-3 3.500-3t3.500 3V7" fill="none" stroke="#fff" strokeWidth="1.300" /><path d="M1 6.500l20-.5v16L1 23z" fill="#fff" /><path d="M5 11l5-.6v3.900H5zM10.800 10.200l6-.7v4.800h-6zM5 15h5v4L5 18.500zM10.800 15h6v5l-6-.8z" fill="#020307" /></svg>
      </div>
      <div className="flex w-[50px] items-center justify-center">
        <svg viewBox="0 0 24 20" className="h-[20px] w-[24px]"><path d="M1 1h8l2 2h11v15H1z" fill="#f5cf5f" /><path d="M3 4h18v10H3z" fill="#fde694" /><path d="M4 19v-8h16v8h-4v-3.500H8V19z" fill="#37b4e8" /></svg>
      </div>
      <div className="flex w-[48px] items-center justify-center">
        <svg viewBox="0 0 22 22" className="h-[22px] w-[22px]"><path d="M1 10.500Q2 1 11.500 1q9 0 9.500 9.500v2.700H7.500q.5 4.600 6 4.600 3.500 0 6-1.600v4.200Q16.500 22 12.500 22 3 22 3 13.500q0-5 4.500-7Q3 6.800 1 10.500zM7.800 9.700h7.300Q15 6 11.600 6T7.800 9.700z" fill="#0f7bd8" fillRule="evenodd" /></svg>
      </div>
      <div className="flex w-[50px] flex-col items-center justify-between px-[5px] pt-[8px]">
        <svg viewBox="0 0 24 24" className="h-[24px] w-[24px]"><circle cx="12" cy="12" r="12" fill="#32a653" /><path d="M12 12L1.600 6A12 12 0 0122.400 6z" fill="#e94235" /><path d="M12 6.500h10.600A12 12 0 0112 24l5-9z" fill="#fbbc05" /><circle cx="12" cy="12" r="5.800" fill="#fff" /><circle cx="12" cy="12" r="4.400" fill="#4285f4" /></svg>
        <div className="h-[2px] w-full bg-[#76b9ed]" />
      </div>
      <div className="flex w-[48px] flex-col items-center justify-between bg-[#33373c] pt-[8px]">
        <div className="flex h-[24px] w-[24px] items-center justify-center bg-[#f7f7f7]"><svg viewBox="0 0 22 22" className="h-[22px] w-[22px]"><Logo mono /></svg></div>
        <div className="h-[2px] w-full bg-[#76b9ed]" />
      </div>
      <div className="ml-auto flex items-center">
        <svg viewBox="0 0 90 20" className="mr-[14px] h-[20px] w-[90px]" fill="none" stroke="#fff" strokeWidth="1.200">
          <path d="M2 13l5.500-6 5.500 6M29 7h9.500v8H27.500M38.500 9.500h1.800v3h-1.800M26 5v3M28.500 5v3M24.500 8h5v2q-.5 2-2.500 2t-2.500-2zM27 12v4" />
          <path d="M50 5.500h12V15H50zM47.500 3.500h4M49 3.500v4M50 15v1.500h8" /><circle cx="58.500" cy="13.500" r="4.300" fill="#e0303e" stroke="none" /><path d="M56.800 11.800l3.400 3.400M60.200 11.800l-3.400 3.400" />
          <path d="M73 3.500h14.500v11.500H84l-3.500 3-.5-3h-7zM76 7h8.500M76 9.500h8.500M76 12h6" />
        </svg>
        <div className="mr-[12px] flex w-[56px] flex-col items-center pb-[3px] text-[11.500px] leading-[17px] text-white"><T w={43}>2:46 PM</T><T w={54}>11-Oct-23</T></div>
        <div className="mr-[3px] h-full w-px bg-[#555]" />
      </div>
    </div>
  );
}

const MENU: [string, number, string][] = [
  ["File", 18, "ml-[8px]"], ["Data", 24, "ml-[16px]"], ["Worksheet", 56, "ml-[16px]"], ["Dashboard", 57, "ml-[16px]"], ["Story", 27, "ml-[16px]"],
  ["Analysis", 43, "ml-[16px]"], ["Map", 24, "ml-[16px]"], ["Format", 38, "ml-[16px]"], ["Server", 32, "ml-[16px]"], ["Window", 44, "ml-[16px]"], ["Help", 25, "ml-[16px]"],
];

export default function App() {
  return (
    <div className="flex h-[768px] w-[1366px] flex-col overflow-hidden bg-white">
      <div className="flex h-[24px] shrink-0 items-center font-['Open_Sans',sans-serif]">
        <svg viewBox="0 0 22 22" className="ml-[2px] h-[17px] w-[17px] border-b border-r border-[#bbb]"><Logo mono /></svg>
        <T w={452} className="ml-[4px] text-[12px] text-[#222]">Tableau - Global Air Transportation Network [from PUBLIC.TABLEAU.COM (DEFAULT)]</T>
        <svg viewBox="0 0 110 20" className="ml-auto mr-[13px] h-[20px] w-[110px]" fill="none" stroke="#222" strokeWidth="1.100"><path d="M2 8.500h10M47.500 5h7.500v7.500h-7.500zM49.500 5V3H57v7.500h-2M93 3.500l10 10M103 3.500l-10 10" /></svg>
      </div>
      <div className="flex h-[19px] shrink-0 items-center font-['Open_Sans',sans-serif] text-[12px] text-black">
        {MENU.map(([m, w, c]) => <div key={m} className={`flex ${c}`}><T w={w}>{m}</T></div>)}
      </div>
      <Toolbar />
      <div className="flex h-[593px] shrink-0"><LeftPanel /><Dashboard /></div>
      <SheetTabs />
      <StatusBar />
      <Taskbar />
    </div>
  );
}
